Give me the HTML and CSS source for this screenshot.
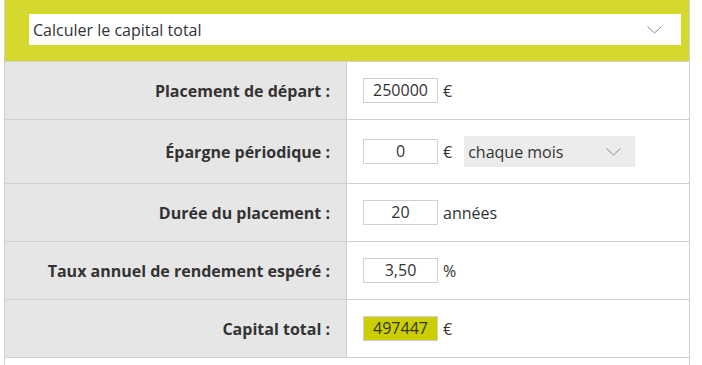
FILE: index.html
```html
<!DOCTYPE html>
<html lang="fr">

<head>
  <meta charset="UTF-8">
  <meta name="viewport" content="width=device-width, initial-scale=1.0">
  <title>Calcul du capital</title>
  <link rel="stylesheet" href="styles.css">
</head>

<body>
  <div class="calc">
    <div class="calc_head">
      <div class="dropdown main_select">
        <span>Calculer le capital total</span>
        <svg class="chev" width="15" height="8" viewBox="0 0 15 8"><path d="M0.5 0.5 L7.5 7 L14.5 0.5" fill="none" stroke="#8a8a8a" stroke-width="1"/></svg>
      </div>
    </div>

    <div class="row">
      <div class="label">Placement de départ :</div>
      <div class="value">
        <div class="field">250000</div><span class="unit">€</span>
      </div>
    </div>
    <div class="row">
      <div class="label">Épargne périodique :</div>
      <div class="value">
        <div class="field">0</div><span class="unit">€</span>
        <div class="dropdown period">
          <span>chaque mois</span>
          <svg class="chev" width="15" height="8" viewBox="0 0 15 8"><path d="M0.5 0.5 L7.5 7 L14.5 0.5" fill="none" stroke="#8a8a8a" stroke-width="1"/></svg>
        </div>
      </div>
    </div>
    <div class="row">
      <div class="label">Durée du placement :</div>
      <div class="value">
        <div class="field">20</div><span class="unit">années</span>
      </div>
    </div>
    <div class="row">
      <div class="label">Taux annuel de rendement espéré :</div>
      <div class="value">
        <div class="field">3,50</div><span class="unit">%</span>
      </div>
    </div>
    <div class="row">
      <div class="label">Capital total :</div>
      <div class="value">
        <div class="field result">497447</div><span class="unit">€</span>
      </div>
    </div>
    <div class="foot"></div>
  </div>
</body>
</html>
```

FILE: styles.css
```css
body {
  margin: 0;
  font-family: "Open Sans", "Liberation Sans", sans-serif;
  font-size: 16px;
  color: #333;
  background: #fff;
}

.calc {
  margin-left: 4px;
  width: 684px;
  border-left: 1px solid #d0d0d0;
  border-right: 1px solid #d0d0d0;
}

.calc_head {
  background: #d5d92e;
  padding: 14px 8px 16px 24px;
  border-bottom: 1px solid #d0d0d0;
}

.dropdown {
  display: flex;
  align-items: center;
  justify-content: space-between;
  height: 31px;
  box-sizing: border-box;
}

.main_select {
  background: #fff;
  padding: 0 19px 0 4px;
}

.row {
  display: grid;
  grid-template-columns: 342px 1fr;
  border-bottom: 1px solid #d0d0d0;
}

.label {
  background: #e6e6e6;
  border-right: 1px solid #d0d0d0;
  display: flex;
  align-items: center;
  justify-content: flex-end;
  padding-right: 16px;
  font-weight: bold;
}

.value {
  display: flex;
  align-items: center;
  padding: 16px;
}

.field {
  width: 75px;
  height: 25px;
  box-sizing: border-box;
  border: 1px solid #d0d0d0;
  text-align: center;
  line-height: 23px;
  background: #fff;
}

.result {
  background: #cbcf00;
}

.unit {
  margin-left: 5px;
}

.period {
  margin-left: 12px;
  width: 171px;
  background: #ececec;
  padding: 0 14px 0 4px;
}

.foot {
  height: 10px;
}
```
